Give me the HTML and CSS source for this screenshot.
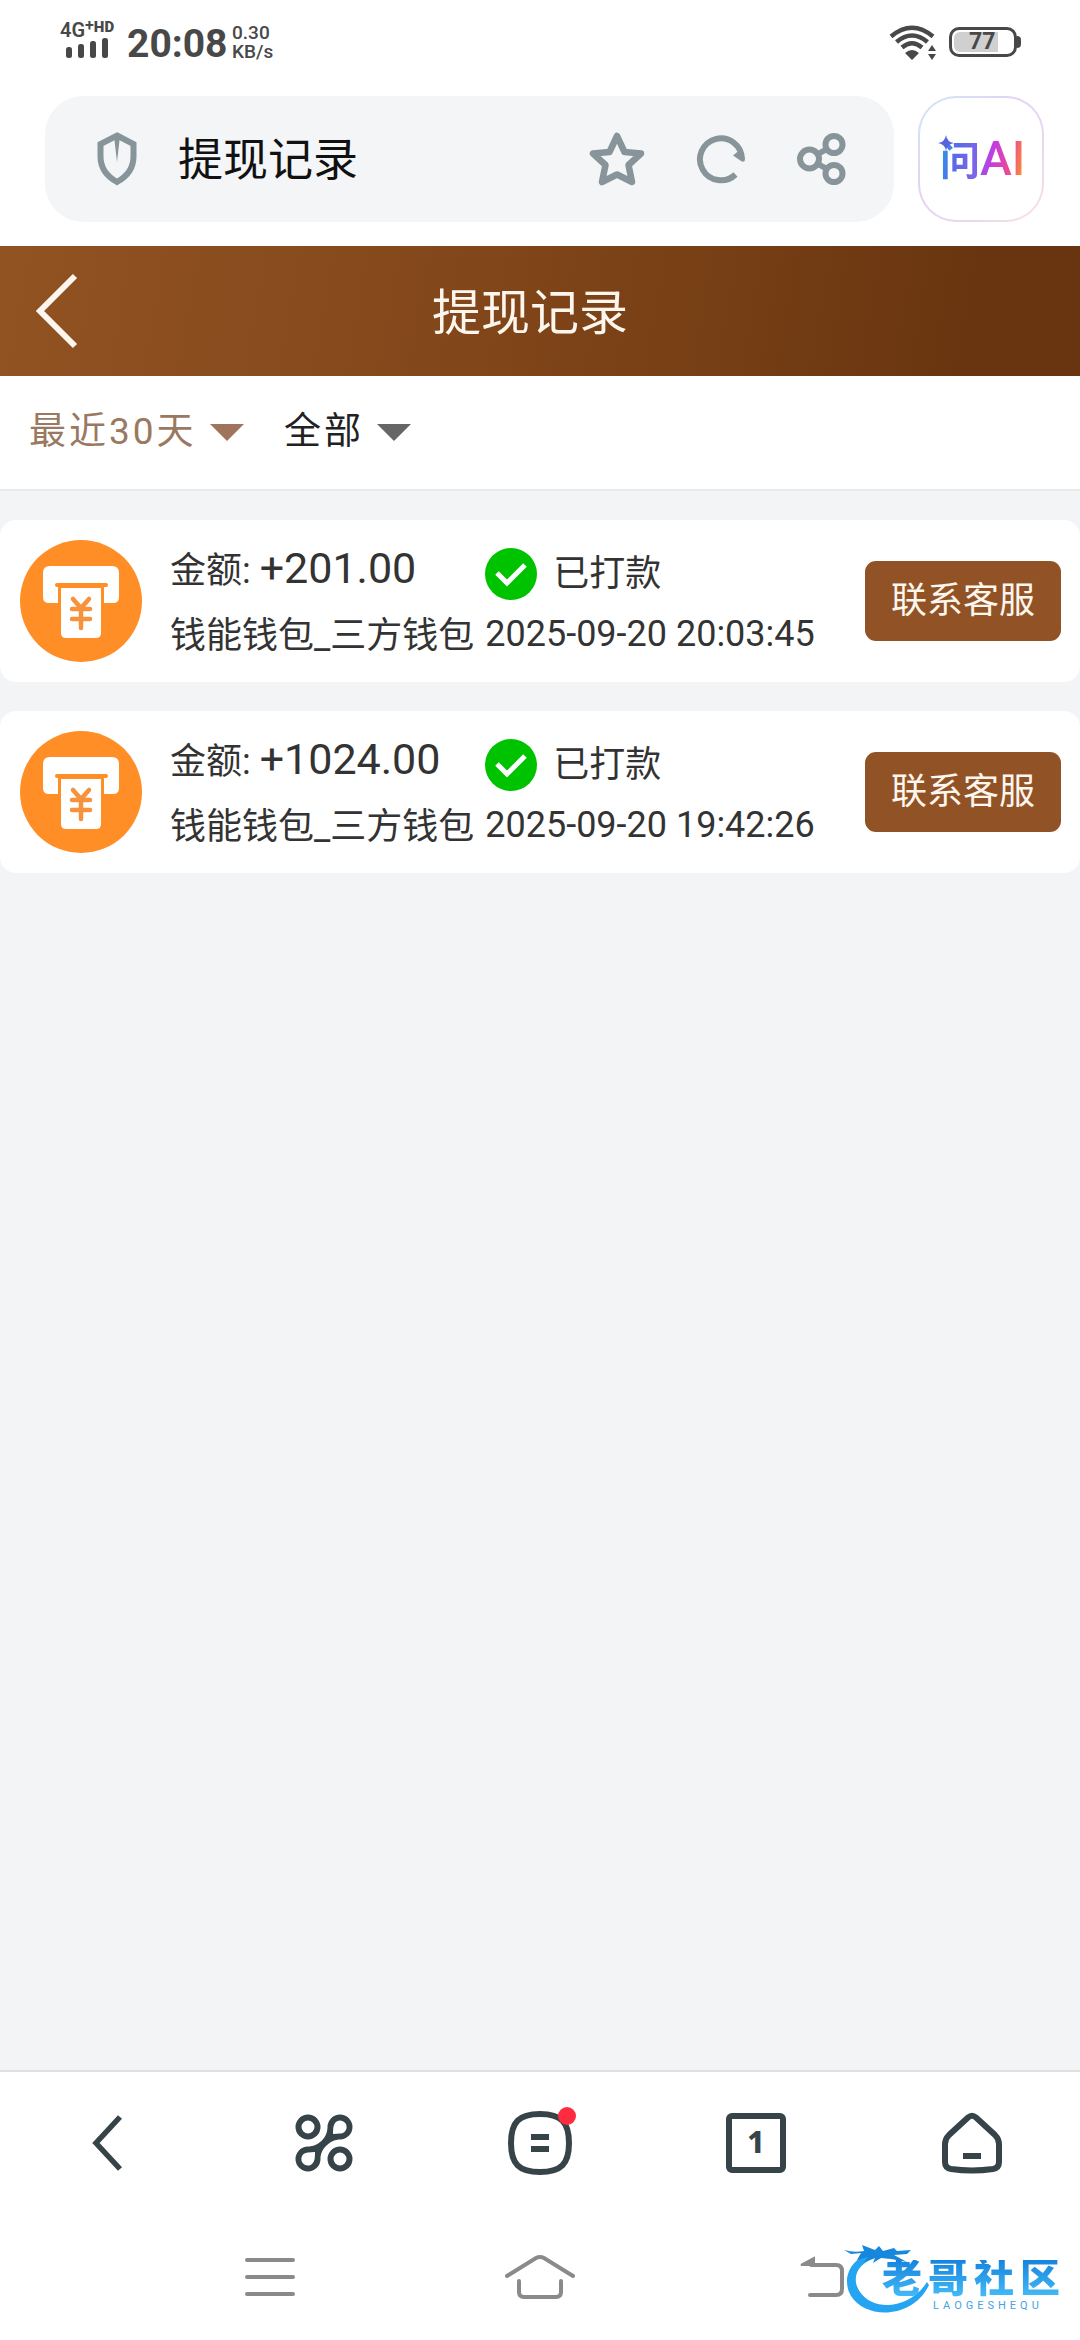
FILE: index.html
```html
<!DOCTYPE html>
<html lang="zh-CN">
<head>
<meta charset="utf-8">
<meta name="viewport" content="width=device-width, initial-scale=1">
<title>提现记录</title>
<link rel="stylesheet" href="styles.css">
</head>
<body>
<div class="status-bar">
  <div class="status-left">
    <div class="network">
      <div class="network-type">4G<sup class="network-sup">+</sup><sup class="network-hd">HD</sup></div>
      <svg class="signal" width="42" height="20" viewBox="0 0 42 20" fill="#484848"><rect y="9" width="6" height="11" rx="2.5"/><rect x="12" y="6" width="6" height="14" rx="2.5"/><rect x="24" y="3" width="6" height="17" rx="2.5"/><rect x="36" width="6" height="20" rx="2.5"/></svg>
    </div>
    <div class="clock">20:08</div>
    <div class="speed">0.30<br>KB/s</div>
  </div>
  <div class="status-right">
    <svg width="48" height="36" viewBox="0 0 48 36" fill="none" stroke="#484848" stroke-width="4.5"><path d="M2 11.500Q23-6 44 11.500M7.500 17Q23 4 38.500 17M13 22.500Q23 14 33 22.500"/><path stroke="none" fill="#484848" d="M16 28Q23 22 30 28L23 35ZM39 26l4-6 4 6ZM39 29h8l-4 6Z"/></svg>
    <div class="battery"><span class="battery-level">77</span></div>
  </div>
</div>

<div class="browser-bar">
  <div class="address">
    <svg class="shield" width="40" height="54" viewBox="0 0 40 54"><path d="M20 3.500 36.500 12v12.500C36.500 37 29 45 20 50 11 45 3.500 37 3.500 24.500V12Z" fill="none" stroke="#87959b" stroke-width="6"/><path d="M17 4h6l-3 26Z" fill="#87959b"/></svg>
    <span class="address-title">提现记录</span>
    <button class="icon-button" aria-label="收藏"><svg width="58" height="56" viewBox="0 0 58 56" fill="none" stroke="#87959b" stroke-width="6.500" stroke-linejoin="round"><path d="M29 5 36.500 21 53 22.500 40.500 34 44 51 29 43.500 14 51 17.500 34 5 22.500 21.500 21Z"/></svg></button>
    <button class="icon-button" aria-label="刷新"><svg width="50" height="50" viewBox="0 0 50 50"><path d="M39.500 40.500A21 21 0 1 1 46 25" fill="none" stroke="#87959b" stroke-width="6"/><path d="M37 21.500 46 14l3 12q-1 3-4 1Z" fill="#87959b"/></svg></button>
    <button class="icon-button" aria-label="分享"><svg width="50" height="54" viewBox="0 0 50 54" fill="none" stroke="#87959b" stroke-width="6"><circle cx="13.500" cy="27" r="9.500"/><circle cx="38" cy="12.500" r="8.500"/><circle cx="38" cy="41.500" r="8.500"/><path d="m22 22 9-5M22 32l9 5"/></svg></button>
  </div>
  <button class="ask-ai" aria-label="问AI">
    <svg class="sparkle" width="16" height="16" viewBox="0 0 16 16"><path d="M8 0Q9 7 16 8 9 9 8 16 7 9 0 8 7 7 8 0Z" fill="#5b62dd"/></svg>
    <span class="ask-ai-text">问<span class="ask-ai-latin">AI</span></span>
  </button>
</div>

<header class="page-header">
  <a class="back-link" href="#" aria-label="返回"><svg width="44" height="76" viewBox="0 0 44 76" fill="none" stroke="#fdf6ee" stroke-width="6"><path d="M39 3 4 38l35 35"/></svg></a>
  <h1 class="page-title">提现记录</h1>
</header>

<form class="filters">
  <label class="filter filter-active"><select class="filter-select" aria-label="时间"><option>最近30天</option></select></label>
  <label class="filter"><select class="filter-select" aria-label="状态"><option>全部</option></select></label>
</form>

<main class="records">
  <article class="record">
    <svg class="record-icon" width="122" height="122" viewBox="0 0 122 122"><circle cx="61" cy="61" r="61" fill="#ff8e26"/><path d="M30 26h62q7 0 7 7v24q0 6-6 6H84V43H38v20h-9q-6 0-6-6V33q0-7 7-7Z" fill="#fff"/><path d="M37 45h49" stroke="#ff8e26" stroke-width="4" stroke-linecap="round"/><path d="M41 48h40v45q0 5-5 5H46q-5 0-5-5Z" fill="#fff"/><path d="m53 59 8 9 8-9M61 68v20M52 69h18M52 79h18" fill="none" stroke="#f6923c" stroke-width="4.500" stroke-linecap="round"/></svg>
    <div class="record-info">
      <div class="amount">金额: <span class="amount-value">+201.00</span></div>
      <div class="state"><svg width="52" height="52" viewBox="0 0 52 52"><circle cx="26" cy="26" r="26" fill="#00c300"/><path d="m12 25 10 10 18-18" fill="none" stroke="#fff" stroke-width="5"/></svg>已打款</div>
      <div class="channel">钱能钱包_三方钱包</div>
      <time class="date">2025-09-20 20:03:45</time>
    </div>
    <button class="contact">联系客服</button>
  </article>
  <article class="record">
    <svg class="record-icon" width="122" height="122" viewBox="0 0 122 122"><circle cx="61" cy="61" r="61" fill="#ff8e26"/><path d="M30 26h62q7 0 7 7v24q0 6-6 6H84V43H38v20h-9q-6 0-6-6V33q0-7 7-7Z" fill="#fff"/><path d="M37 45h49" stroke="#ff8e26" stroke-width="4" stroke-linecap="round"/><path d="M41 48h40v45q0 5-5 5H46q-5 0-5-5Z" fill="#fff"/><path d="m53 59 8 9 8-9M61 68v20M52 69h18M52 79h18" fill="none" stroke="#f6923c" stroke-width="4.500" stroke-linecap="round"/></svg>
    <div class="record-info">
      <div class="amount">金额: <span class="amount-value">+1024.00</span></div>
      <div class="state"><svg width="52" height="52" viewBox="0 0 52 52"><circle cx="26" cy="26" r="26" fill="#00c300"/><path d="m12 25 10 10 18-18" fill="none" stroke="#fff" stroke-width="5"/></svg>已打款</div>
      <div class="channel">钱能钱包_三方钱包</div>
      <time class="date">2025-09-20 19:42:26</time>
    </div>
    <button class="contact">联系客服</button>
  </article>
</main>

<nav class="toolbar">
  <button class="tool" aria-label="后退"><svg width="62" height="62" viewBox="0 0 62 62" fill="none" stroke="#364349" stroke-width="5.500"><path d="M43 5 19 31l24 26"/></svg></button>
  <button class="tool" aria-label="应用"><svg width="62" height="62" viewBox="0 0 62 62"><g fill="none" stroke="#364349" stroke-width="6"><circle cx="15" cy="15" r="9.500"/><circle cx="47" cy="47" r="9.500"/></g><path fill="#364349" fill-rule="evenodd" d="M34.500 15A12.500 12.500 0 1 1 47 27.500C38 27.500 27.500 36 27.500 47A12.500 12.500 0 1 1 15 34.500C25 34.500 34.500 26 34.500 15ZM40 22Q40 15 41 13A6.500 6.500 0 1 1 47 21.500ZM22 40Q22 47 21 49A6.500 6.500 0 1 1 15 40.500Z"/></svg></button>
  <button class="tool" aria-label="菜单"><svg width="64" height="64" viewBox="0 0 64 64" fill="none" stroke="#364349" stroke-width="6"><path d="M32 3C53 3 61 11 61 32S53 61 32 61 3 53 3 32 11 3 32 3ZM23 26h18M23 38h18"/></svg><span class="notice-dot"></span></button>
  <button class="tool" aria-label="窗口 1"><span class="tab-count">1</span></button>
  <button class="tool" aria-label="主页"><svg width="62" height="62" viewBox="0 0 62 62" fill="none" stroke="#364349" stroke-width="6"><path d="M27 5.500q4-3.500 8 0L54 23q4 4 4 9v18q0 6-6 7-21 3-42 0-6-1-6-7V32q0-5 4-9ZM22 44h18"/></svg></button>
</nav>

<nav class="system-nav">
  <button class="system-button" aria-label="最近任务"><svg width="70" height="46" viewBox="0 0 70 46" stroke="#8a8a8a" stroke-width="4" stroke-linecap="round"><path d="M12 6h46M12 23h46M12 40h46"/></svg></button>
  <button class="system-button" aria-label="桌面"><svg width="70" height="46" viewBox="0 0 70 46" fill="none" stroke="#8a8a8a" stroke-width="4" stroke-linecap="round"><path d="M2 22 31 4q4-2 8 0l29 18M14 27v11q0 5 5 5h32q5 0 5-5V27"/></svg></button>
  <button class="system-button" aria-label="返回"><svg width="70" height="46" viewBox="0 0 70 46" fill="none" stroke="#8a8a8a" stroke-width="4" stroke-linecap="round"><path d="M36 11h25q6 0 6 6v18q0 6-6 6H35"/><path d="m26 11 13-7v7Z" fill="#8a8a8a" stroke-width="2"/></svg></button>
</nav>

<div class="watermark">
  <svg class="watermark-dragon" width="92" height="74" viewBox="0 0 92 74"><path d="M30 11C6 17 0 39 9 54c15 24 62 23 78-11l-2-3c-17 27-53 30-67 10C9 37 14 21 36 15Z" fill="#25a4f2"/><path d="M2 8q10 3 20 1L20 3l13 5 4-4 4 5 11-3 3 3 14-1-4 4-13 1 13 7-16-3-10-1-8 5 2-5-11 4 4-5-11 3 4-7-10 1Z" fill="#1787dc"/></svg>
  <span class="watermark-name">老哥社区</span>
  <span class="watermark-latin">LAOGESHEQU</span>
</div>
</body>
</html>
```
FILE: styles.css
```css
* { box-sizing: border-box; }

body {
  margin: 0;
  min-height: 100vh;
  display: flex;
  flex-direction: column;
  position: relative;
  background: #fff;
  color: #333;
  font-family: Roboto, "Noto Sans CJK SC", sans-serif;
  font-size: 36px;
}

button {
  margin: 0;
  padding: 0;
  border: 0;
  background: none;
  font: inherit;
  color: inherit;
}

svg { display: block; flex: none; }

/* Phone status bar */
.status-bar {
  height: 96px;
  padding: 21px 59px 0 60px;
  display: flex;
  justify-content: space-between;
  color: #484848;
}

.status-left { display: flex; }

.network { width: 67px; }

.network-type {
  display: flex;
  height: 17px;
  font-size: 20px;
  line-height: 18px;
  font-weight: 600;
}

.network-sup { font-size: 16px; line-height: 10px; }
.network-hd { font-size: 15px; line-height: 13px; font-weight: 900; }
.signal { margin-left: 6px; }

.clock {
  width: 105px;
  font-size: 39px;
  line-height: 46px;
  font-weight: 700;
}

.speed {
  padding-top: 2px;
  font-size: 19px;
  line-height: 19px;
  font-weight: 500;
}

.status-right {
  display: flex;
  gap: 12px;
  padding-top: 4px;
}

.battery {
  position: relative;
  width: 68px;
  height: 30px;
  margin: 2px 4px 0 0;
  padding: 2px;
  border: 3px solid #484848;
  border-radius: 10px;
}

.battery::after {
  content: "";
  position: absolute;
  right: -7px;
  top: 6px;
  width: 4px;
  height: 12px;
  border-radius: 0 4px 4px 0;
  background: #484848;
}

.battery-level {
  display: block;
  width: 44px;
  height: 20px;
  padding-left: 15px;
  border-radius: 6px 0 0 6px;
  background: #d0d0d0;
  font-size: 23px;
  line-height: 20px;
  font-weight: 700;
}

/* Browser address bar */
.browser-bar {
  display: flex;
  gap: 24px;
  padding: 0 36px 24px 45px;
}

.address {
  flex: 1;
  height: 126px;
  display: flex;
  align-items: center;
  padding: 0 48px 0 52px;
  border-radius: 38px;
  background: #f3f5f7;
}

.address-title {
  flex: 1;
  margin-left: 41px;
  padding-top: 4px;
  font-size: 45px;
  line-height: 60px;
  color: #111;
}

.icon-button + .icon-button { margin-left: 50px; }

.ask-ai {
  position: relative;
  width: 126px;
  height: 126px;
  border: 2px solid transparent;
  border-radius: 38px;
  background:
    linear-gradient(#fff, #fff) padding-box,
    linear-gradient(135deg, #cfe6f7, #e3d3f3 40%, #ead6ee 70%, #fbe3df) border-box;
}

.ask-ai-text {
  display: block;
  width: 82px;
  margin: 0 auto;
  padding-top: 2px;
  background: linear-gradient(100deg, #19a5e6 2%, #5d68e8 22%, #7a66e8 45%, #c63be0 62%, #ee4a90 82%, #f9a01c);
  background-clip: text;
  color: transparent;
  font-size: 40px;
  line-height: 60px;
  font-weight: 700;
  white-space: nowrap;
}

.ask-ai-latin { font-size: 48px; font-weight: 500; }

.sparkle {
  position: absolute;
  left: 18px;
  top: 37px;
}

/* Page header */
.page-header {
  height: 130px;
  display: grid;
  grid-template-columns: 80px 1fr 100px;
  align-items: center;
  background: linear-gradient(100deg, #925322, #85491c 35%, #7a4116 60%, #683510 90%);
  color: #fdf6ee;
}

.back-link { padding-left: 36px; }

.page-title {
  margin: 0;
  padding-top: 6px;
  text-align: center;
  font-size: 49px;
  line-height: 60px;
  font-weight: 400;
}

/* Filters */
.filters {
  height: 115px;
  display: flex;
  align-items: flex-start;
  gap: 40px;
  padding: 30px 29px 0;
  border-bottom: 2px solid #e9eaec;
}

.filter {
  display: flex;
  align-items: center;
  gap: 13px;
  color: #222;
}

.filter::after {
  content: "";
  border: 17px solid transparent;
  border-top-color: #666;
  border-bottom-width: 0;
}

.filter-active { color: #9a7861; }
.filter-active::after { border-top-color: #a0745c; }

.filter-select {
  appearance: none;
  margin: 0;
  padding: 0;
  border: 0;
  background: none;
  color: inherit;
  font: inherit;
  font-size: 37px;
  line-height: 52px;
  letter-spacing: 3px;
}

/* Records */
.records {
  flex: 1;
  display: flex;
  flex-direction: column;
  gap: 29px;
  padding: 29px 0;
  background: #f3f4f6;
}

.record {
  display: flex;
  align-items: center;
  padding: 20px 19px 20px 20px;
  border-radius: 16px;
  background: #fff;
}

.record-info {
  flex: 1;
  display: grid;
  grid-template-columns: auto 1fr;
  gap: 9px 11px;
  margin-left: 28px;
  line-height: 44px;
  white-space: nowrap;
}

.amount { line-height: 46px; }
.amount-value { font-size: 43px; }
.channel { padding-top: 2px; }

.state {
  display: flex;
  align-items: center;
  gap: 16px;
  height: 58px;
}

.contact {
  width: 196px;
  height: 80px;
  border-radius: 11px;
  background: #915325;
  color: #fdf6ee;
  line-height: 48px;
}

/* Browser toolbar */
.toolbar {
  height: 144px;
  display: grid;
  grid-template-columns: repeat(5, 1fr);
  border-top: 2px solid #dedfe0;
}

.tool {
  position: relative;
  display: flex;
  align-items: center;
  justify-content: center;
}

.notice-dot {
  position: absolute;
  left: calc(50% + 18px);
  top: 35px;
  width: 18px;
  height: 18px;
  border-radius: 50%;
  background: #ff2c3f;
}

.tab-count {
  width: 60px;
  height: 60px;
  border: 6px solid #364349;
  border-radius: 6px;
  color: #364349;
  font-family: "Noto Sans", sans-serif;
  font-size: 30px;
  line-height: 46px;
  font-weight: 800;
}

/* System navigation */
.system-nav {
  height: 126px;
  display: flex;
  justify-content: center;
  gap: 200px;
}

.system-button { width: 70px; }

/* Community logo laid over the corner */
.watermark {
  position: absolute;
  right: 12px;
  bottom: 22px;
  width: 226px;
  height: 76px;
  pointer-events: none;
}

.watermark-dragon { position: absolute; left: 0; top: 0; }

.watermark-name {
  position: absolute;
  left: 40px;
  top: 18px;
  background: linear-gradient(#1684de, #45bdf8);
  background-clip: text;
  color: transparent;
  font-size: 40px;
  line-height: 38px;
  font-weight: 900;
  letter-spacing: 6px;
  white-space: nowrap;
}

.watermark-latin {
  position: absolute;
  left: 91px;
  top: 58px;
  color: #3fa3e4;
  font-size: 11px;
  line-height: 12px;
  letter-spacing: 4px;
}
```
